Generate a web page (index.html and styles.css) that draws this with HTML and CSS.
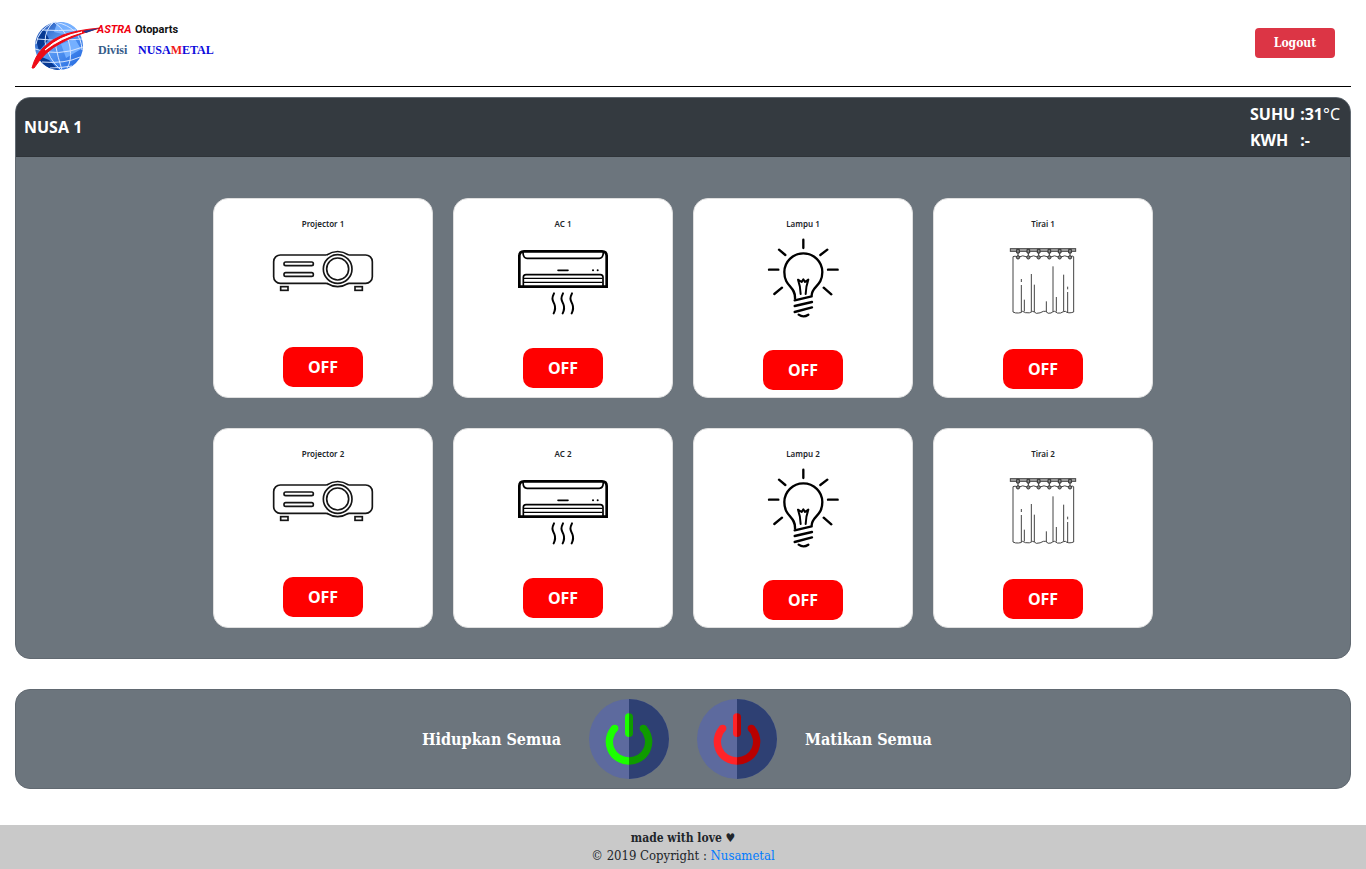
FILE: index.html
```
<!DOCTYPE html>
<html lang="id">
<head>
<meta charset="utf-8">
<meta name="viewport" content="width=device-width, initial-scale=1">
<title>Nusametal</title>
<link rel="stylesheet" href="styles.css">
</head>
<body>
<svg class="sprite" aria-hidden="true">
  <symbol id="projector" viewBox="189 132 330 300">
    <g fill="#fff" stroke="#151515" stroke-width="5">
      <rect x="206" y="195" width="296" height="85" rx="20"/>
      <circle cx="398" cy="237" r="52" stroke="none"/>
      <path d="M365 195Q398 174 431 195M365 280Q398 300 431 280" />
      <circle cx="398" cy="237" r="43"/>
      <circle cx="398" cy="237" r="33"/>
      <rect x="237" y="216" width="88" height="11" rx="5"/>
      <rect x="237" y="248" width="88" height="11" rx="5"/>
      <rect x="227" y="290" width="22" height="11"/>
      <rect x="450" y="290" width="22" height="11"/>
    </g>
  </symbol>
  <symbol id="ac" viewBox="189 132 330 303">
    <g fill="none" stroke="#000" stroke-linecap="round">
      <path d="M223 290V198Q223 184 237 184H471Q485 184 485 198V290Z" stroke-width="8"/>
      <path d="M234 188Q235 205 246 205H463Q474 205 475 188" stroke-width="5"/>
      <path d="M235 288V262Q235 254 243 254H466Q474 254 474 262V288" stroke-width="5"/>
      <path d="M238 265H471M238 277H471" stroke-width="4"/>
      <path d="M339 241H369" stroke-width="5"/>
      <path d="M444 241h.1M458 241h.1" stroke-width="6"/>
      <path d="M327 310C318 328 324 332 328 342C333 354 330 362 326 370M354 310C345 328 351 332 355 342C360 354 357 362 353 370M381 310C372 328 378 332 382 342C387 354 384 362 380 370" stroke-width="6"/>
    </g>
  </symbol>
  <symbol id="lamp" viewBox="189 132 330 309">
    <g fill="none" stroke="#000" stroke-width="7" stroke-linecap="round" stroke-linejoin="round">
      <path d="M355 149V174M282 179L301 195M427 179L406 195M252 239H280M429 239H458M268 312L291 293M439 313L416 293"/>
      <path d="M330 325C332 288 298 291 298 246A57 56 0 0 1 412 246C412 291 378 288 380 319L329 331"/>
      <path d="M329 348L381 336M329 366L381 352M341 374Q355 384 370 374"/>
      <path d="M347 312Q346 288 339 269L350 276L355 268L360 276L370 269Q363 288 362 312" stroke-width="6"/>
    </g>
  </symbol>
  <symbol id="curtain" viewBox="189 132 330 306">
    <g fill="none" stroke="#444" stroke-width="3">
      <rect x="256" y="176" width="196" height="8" fill="#aaa"/>
      <path d="M264 200V366Q271 370 280 369Q290 369 292 364Q298 366 301 368Q314 371 323 364Q329 366 334 370Q346 370 355 364H362Q369 373 378 369Q384 364 389 364Q397 372 407 369Q415 364 421 364Q430 372 446 366V200Q442 195 435 202Q419 193 404 202Q389 193 373 202Q357 193 341 202Q326 193 310 202Q292 193 279 202Q269 196 264 200"/>
      <path d="M289 267V276M289 285V366M298 329V364M319 252V365M328 284V366M364 334V366M384 229V365M394 321V365M416 254V364M428 290V298M428 306V366"/>
      <g fill="#888" stroke="#333">
        <path d="M275 178h8v11h-8zM306 178h8v11h-8zM337 178h8v11h-8zM369 178h8v11h-8zM400 178h8v11h-8zM431 178h8v11h-8z"/>
        <path d="M279 189v8M310 189v8M341 189v8M373 189v8M404 189v8M435 189v8"/>
        <circle cx="279" cy="202" r="5"/><circle cx="310" cy="202" r="5"/><circle cx="341" cy="202" r="5"/><circle cx="373" cy="202" r="5"/><circle cx="404" cy="202" r="5"/><circle cx="435" cy="202" r="5"/>
      </g>
    </g>
  </symbol>
  <symbol id="power" viewBox="0 0 240 240">
    <circle cx="120" cy="120" r="120" fill="#5d6a9e"/>
    <path d="M120 0A120 120 0 0 1 120 240Z" fill="#2e4073"/>
    <g fill="none" stroke-width="22" stroke-linecap="round">
      <path d="M77 88A58 58 0 0 0 120 186" class="power-light" stroke-linecap="butt"/>
      <path d="M77 88h.1" class="power-light"/>
      <path d="M163 88A58 58 0 0 1 120 186" class="power-dark" stroke-linecap="butt"/>
      <path d="M163 88h.1" class="power-dark"/>
    </g>
    <path d="M120 43A12 12 0 0 0 108 55V102A12 12 0 0 0 120 114Z" class="power-fill-light"/>
    <path d="M120 43A12 12 0 0 1 132 55V102A12 12 0 0 1 120 114Z" class="power-fill-dark"/>
  </symbol>
</svg>

<header class="topbar">
  <svg class="logo" viewBox="0 0 200 60" role="img" aria-label="Astra Otoparts Divisi Nusametal">
    <defs>
      <linearGradient id="sea" x1="0" y1="0" x2="1" y2="1">
        <stop offset="0" stop-color="#1846a8"/><stop offset=".45" stop-color="#5c9df5"/><stop offset="1" stop-color="#1d63dd"/>
      </linearGradient>
    </defs>
    <circle cx="34" cy="33" r="24" fill="url(#sea)"/>
    <path d="M32 10Q44 7 52 17L42 22L29 19ZM36 31L50 26L56 36L41 45Z" fill="#75b0ff"/>
    <path d="M11 27L19 16L24 26L14 38ZM12 42L24 47L34 57Q18 56 12 42Z" fill="#073993"/>
    <path d="M29 9Q20 16 20 29Q23 46 36 57M29 9Q43 19 45 34Q47 48 42 55M30 9Q56 14 57 37M29 9Q13 17 11 31M17 17Q33 18 51 17M12 26Q34 29 57 26M10 36Q33 44 58 34M17 49Q40 51 55 44M25 55Q35 55 47 53M30 30Q33 45 37 57" fill="none" stroke="#d5e5ff"/>
    <path d="M7 55Q10 43 18 35Q27 26 38 22Q52 17 75 15Q52 21 36 30Q20 38 9 55Z" fill="#ee0b17" stroke="#ee0b17"/>
    <path d="M20 37Q34 23 57 19Q36 25 20 37Z" fill="#fff" stroke="#fff"/>
    <path d="M58 18L75 15L61 20Z" fill="#183b91"/>
    <text x="72" y="20" class="logo-sans logo-astra">ASTRA</text>
    <text x="110" y="20" class="logo-sans">Otoparts</text>
    <text x="73" y="41" class="logo-serif logo-divisi">Divisi</text>
    <text x="113" y="41" class="logo-serif">NUSA<tspan class="logo-red">M</tspan>ETAL</text>
  </svg>
  <button class="logout" type="button">Logout</button>
</header>

<main>
  <section class="panel">
    <div class="panel-head">
      <h1 class="heading">NUSA 1</h1>
      <dl class="readings">
        <dt>SUHU</dt><dd>:31<span class="unit">°C</span></dd>
        <dt>KWH</dt><dd>:-</dd>
      </dl>
    </div>
    <div class="devices">
      <article class="card"><h2 class="name">Projector 1</h2><svg class="icon icon-projector"><use href="#projector"/></svg><button class="switch" type="button">OFF</button></article>
      <article class="card"><h2 class="name">AC 1</h2><svg class="icon icon-ac"><use href="#ac"/></svg><button class="switch" type="button">OFF</button></article>
      <article class="card"><h2 class="name">Lampu 1</h2><svg class="icon icon-lamp"><use href="#lamp"/></svg><button class="switch" type="button">OFF</button></article>
      <article class="card"><h2 class="name">Tirai 1</h2><svg class="icon icon-curtain"><use href="#curtain"/></svg><button class="switch" type="button">OFF</button></article>
      <article class="card"><h2 class="name">Projector 2</h2><svg class="icon icon-projector"><use href="#projector"/></svg><button class="switch" type="button">OFF</button></article>
      <article class="card"><h2 class="name">AC 2</h2><svg class="icon icon-ac"><use href="#ac"/></svg><button class="switch" type="button">OFF</button></article>
      <article class="card"><h2 class="name">Lampu 2</h2><svg class="icon icon-lamp"><use href="#lamp"/></svg><button class="switch" type="button">OFF</button></article>
      <article class="card"><h2 class="name">Tirai 2</h2><svg class="icon icon-curtain"><use href="#curtain"/></svg><button class="switch" type="button">OFF</button></article>
    </div>
  </section>

  <section class="panel all">
    <span class="all-label all-label-on" id="on-label">Hidupkan Semua</span>
    <button class="power power-on" type="button" aria-labelledby="on-label"><svg class="power-icon"><use href="#power"/></svg></button>
    <button class="power power-off" type="button" aria-labelledby="off-label"><svg class="power-icon"><use href="#power"/></svg></button>
    <span class="all-label" id="off-label">Matikan Semua</span>
  </section>
</main>

<footer class="footer">
  <strong class="love">made with love ♥</strong>
  <span class="copyright">© 2019 Copyright : <a class="link" href="#">Nusametal</a></span>
</footer>
</body>
</html>
```
FILE: styles.css
```
* { box-sizing: border-box; }

body {
  display: flex;
  flex-direction: column;
  min-height: 100vh;
  margin: 0;
  background: #fff;
  color: #212529;
  font-family: "DejaVu Serif Condensed", "DejaVu Serif", serif;
  font-size: 12px;
}

button { border: 0; font-family: inherit; cursor: pointer; }

.sprite { position: absolute; width: 0; height: 0; }

.topbar {
  display: flex;
  align-items: center;
  justify-content: space-between;
  margin: 0 15px 10px;
  padding: 13px 16px 13px 10px;
  border-bottom: 1px solid #000;
}

.logo { width: 200px; height: 60px; }
.logo-sans { font: bold 11px Roboto, "Liberation Sans", sans-serif; fill: #111; }
.logo-astra { font-style: italic; fill: #f00010; }
.logo-serif { font: bold 12px "Liberation Serif", serif; fill: #0b0bdc; }
.logo-divisi { fill: #355c8a; }
.logo-red { fill: #f01818; }

.logout {
  width: 80px;
  height: 30px;
  border-radius: 4px;
  background: #dc3545;
  color: #fff;
  font-size: 12px;
  font-weight: bold;
}

main { flex: 1; padding: 0 15px; }

.panel {
  margin-bottom: 30px;
  overflow: hidden;
  border: 1px solid #616971;
  border-radius: 15px;
  background: #6c757d;
  color: #fff;
}

.panel-head {
  display: flex;
  align-items: center;
  justify-content: space-between;
  margin: -1px -1px 0;
  padding: 4px 11px 3px 9px;
  border-bottom: 1px solid #2f3439;
  background: #343a40;
}

.heading,
.readings,
.switch {
  margin: 0;
  font-family: "Noto Sans", sans-serif;
  font-size: 16px;
  font-weight: bold;
}

.readings {
  display: grid;
  grid-template-columns: auto auto;
  column-gap: 5px;
  line-height: 26px;
}
.readings dd { margin: 0; }
.unit { font-weight: normal; }

.devices {
  display: flex;
  flex-wrap: wrap;
  justify-content: center;
  gap: 30px 20px;
  max-width: 940px;
  margin: 0 auto;
  padding: 41px 0 30px;
}

.card {
  display: flex;
  flex-direction: column;
  align-items: center;
  width: 220px;
  height: 200px;
  padding-top: 19px;
  border: 1px solid #dfdfdf;
  border-radius: 15px;
  background: #fff;
  color: #212529;
}

.name {
  margin: 0 0 4px;
  font-family: "Noto Sans", sans-serif;
  font-size: 8px;
  font-weight: 600;
  line-height: 12px;
}

.icon { width: 110px; margin-bottom: 13px; flex: none; }
.icon-projector { height: 100px; }
.icon-ac { height: 101px; }
.icon-lamp { height: 103px; }
.icon-curtain { height: 102px; }

.switch {
  flex: none;
  width: 80px;
  height: 40px;
  border-radius: 10px;
  background: #f00;
  color: #fff;
}

.all {
  display: grid;
  grid-template-columns: 1fr auto auto 1fr;
  align-items: center;
  column-gap: 28px;
  padding: 9px 0;
}
.all-label { font-size: 16px; font-weight: bold; }
.all-label-on { text-align: right; }

.power { padding: 0; border-radius: 50%; background: none; }
.power-icon { display: block; width: 80px; height: 80px; }
.power-on { --light: #1bff00; --dark: #0f9b00; }
.power-off { --light: #ff2429; --dark: #b90000; }
.power-light { stroke: var(--light); }
.power-dark { stroke: var(--dark); }
.power-fill-light { fill: var(--light); }
.power-fill-dark { fill: var(--dark); }

.footer {
  display: flex;
  flex-direction: column;
  align-items: center;
  padding: 4px 0;
  background: #c9c9c9;
  line-height: 18px;
}
.copyright { font-size: 13px; }
.link { color: #007bff; text-decoration: none; }
```
